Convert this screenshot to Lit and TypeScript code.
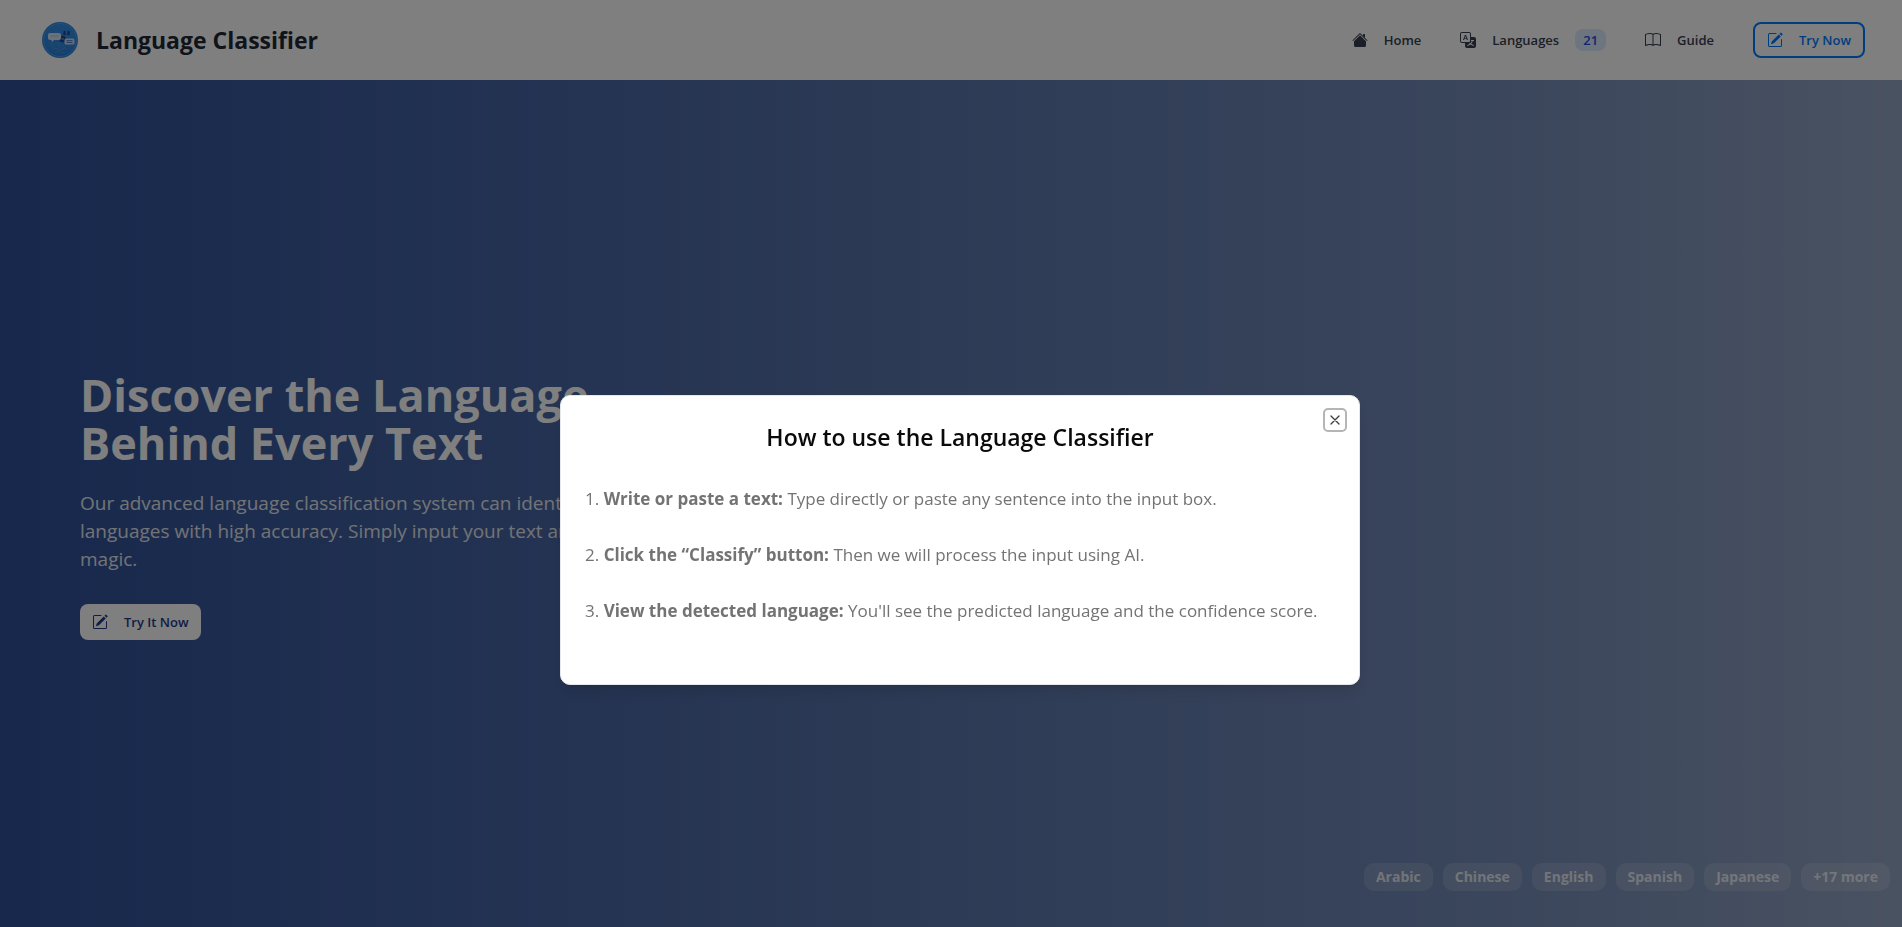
import { LitElement, html, css, svg, nothing } from "lit";
import { customElement, property, state } from "lit/decorators.js";

const ICONS: Record<string, string[]> = {
  home: [
    "M13 2.5V6l-2-2V2.5a.5.5 0 0 1 .5-.5h1a.5.5 0 0 1 .5.5z",
    "M8 3.3l6 6v4.2a1.5 1.5 0 0 1-1.500 1.500h-9A1.500 1.500 0 0 1 2 13.500V9.300l6-6z",
    "M7.293 1.500a1 1 0 0 1 1.414 0l6.647 6.646a.5.5 0 0 1-.708.708L8 2.207 1.354 8.854a.5.5 0 1 1-.708-.708L7.293 1.500z",
  ],
  translate: [
    "M4.545 6.714 4.110 8H3l1.862-5h1.284L8 8H6.833l-.435-1.286H4.545zm1.634-.736L5.500 3.956h-.049l-.679 2.022H6.180z",
    "M0 2a2 2 0 0 1 2-2h7a2 2 0 0 1 2 2v3h3a2 2 0 0 1 2 2v7a2 2 0 0 1-2 2H7a2 2 0 0 1-2-2v-3H2a2 2 0 0 1-2-2V2zm2-1a1 1 0 0 0-1 1v7a1 1 0 0 0 1 1h7a1 1 0 0 0 1-1V2a1 1 0 0 0-1-1H2zm7.138 9.995c.193.301.402.583.630.846-.748.575-1.673 1.001-2.768 1.292.178.217.451.635.555.867 1.125-.359 2.080-.844 2.886-1.494.777.665 1.739 1.165 2.930 1.472.133-.254.414-.673.629-.890-1.125-.253-2.057-.694-2.820-1.284.681-.747 1.222-1.651 1.621-2.757H14V8h-3v1.047h.765c-.318.844-.740 1.546-1.272 2.130a6.066 6.066 0 0 1-.415-.492 1.988 1.988 0 0 1-.940.310z",
  ],
  book: [
    "M1 2.828c.885-.370 2.154-.769 3.388-.893 1.330-.134 2.458.063 3.112.752v9.746c-.935-.530-2.120-.603-3.213-.493-1.180.120-2.370.461-3.287.811V2.828zm7.500-.141c.654-.689 1.782-.886 3.112-.752 1.234.124 2.503.523 3.388.893v9.923c-.918-.350-2.107-.692-3.287-.810-1.094-.111-2.278-.039-3.213.492V2.687zM8 1.783C7.015.936 5.587.810 4.287.940c-1.514.153-3.042.672-3.994 1.105A.5.5 0 0 0 0 2.500v11a.5.5 0 0 0 .707.455c.882-.400 2.303-.881 3.680-1.020 1.409-.142 2.590.087 3.223.877a.5.5 0 0 0 .780 0c.633-.790 1.814-1.019 3.222-.877 1.378.139 2.800.620 3.681 1.020A.5.5 0 0 0 16 13.500v-11a.5.5 0 0 0-.293-.455c-.952-.433-2.480-.952-3.994-1.105C10.413.809 8.985.936 8 1.783z",
  ],
  pencil: [
    "M15.502 1.940a.5.5 0 0 1 0 .706L14.459 3.690l-2-2L13.502.646a.5.5 0 0 1 .707 0l1.293 1.293zm-1.750 2.456-2-2L4.939 9.210a.5.5 0 0 0-.121.196l-.805 2.414a.250.250 0 0 0 .316.316l2.414-.805a.5.5 0 0 0 .196-.120l6.813-6.814z",
    "M1 13.500A1.500 1.500 0 0 0 2.500 15h11a1.500 1.500 0 0 0 1.500-1.500v-6a.5.5 0 0 0-1 0v6a.5.5 0 0 1-.5.5h-11a.5.5 0 0 1-.5-.5v-11a.5.5 0 0 1 .5-.5H9a.5.5 0 0 0 0-1H2.500A1.500 1.500 0 0 0 1 2.500v11z",
  ],
};

@customElement("lc-icon")
export class LcIcon extends LitElement {
  @property() name = "home";

  static styles = css`
    :host { display: block; width: 16px; height: 16px; flex: none; }
    svg { display: block; width: 100%; height: 100%; }
  `;

  render() {
    return html`<svg viewBox="0 0 16 16" fill="currentColor" aria-hidden="true">
      ${(ICONS[this.name] ?? []).map((d) => svg`<path fill-rule="evenodd" d=${d}></path>`)}
    </svg>`;
  }
}

@customElement("lc-logo")
export class LcLogo extends LitElement {
  static styles = css`
    :host { display: block; width: 36px; height: 36px; flex: none; }
    svg { display: block; width: 100%; height: 100%; }
  `;

  render() {
    return html`<svg viewBox="0 0 36 36" role="img" aria-label="Language Classifier logo">
      <defs>
        <linearGradient id="disc" x1="0" y1="0" x2="0" y2="1">
          <stop offset="0" stop-color="#3591ea"></stop>
          <stop offset="1" stop-color="#2a80d8"></stop>
        </linearGradient>
      </defs>
      <circle cx="18" cy="18" r="18" fill="#2f88e2"></circle>
      <circle cx="18" cy="18" r="16.500" fill="url(#disc)" stroke="#58a4f0" stroke-width=".7"></circle>
      <g fill="none" stroke="#5d9edb" stroke-width=".6" stroke-dasharray="2 1">
        <path d="M7 24l3-3 3 2 4-3 4 4 5-2 3 3M10 28l4-2 3 3 5-3 4 1M13 31l3-2 4 2 3-1M9 21l2 5 4 1 2-5 3 6 4-4"></path>
      </g>
      <g fill="#1c4a96">
        <circle cx="22.500" cy="10" r="1.200"></circle><path d="M21 13l.7-2.500h1.600L24 13z"></path>
        <circle cx="26.500" cy="10" r="1.200"></circle><path d="M25 13l.7-2.500h1.600L28 13z"></path>
        <circle cx="20.500" cy="17" r="3.200"></circle>
      </g>
      <circle cx="20.700" cy="17" r="1.200" fill="#4a80c4"></circle>
      <path d="M8 11h9a2 2 0 0 1 2 2v3a2 2 0 0 1-2 2h-5l-2 2-.5-2H8a2 2 0 0 1-2-2v-3a2 2 0 0 1 2-2z" fill="#d9e4f4"></path>
      <path d="M8.500 14h8" stroke="#a9c0e2" stroke-width=".8"></path>
      <rect x="22.500" y="16.500" width="10" height="6" rx="1.500" fill="#c9daf2"></rect>
      <path d="M24.500 18.700h6M24.500 20.500h6" stroke="#3568b0" stroke-width=".8"></path>
    </svg>`;
  }
}

const LANGUAGES = ["Arabic", "Chinese", "English", "Spanish", "Japanese", "+17 more"];

const STEPS = [
  { title: "Write or paste a text:", body: "Type directly or paste any sentence into the input box." },
  { title: "Click the “Classify” button:", body: "Then we will process the input using AI." },
  { title: "View the detected language:", body: "You'll see the predicted language and the confidence score." },
];

@customElement("app-root")
export class AppRoot extends LitElement {
  @state() private guideOpen = true;

  static styles = css`
    :host {
      display: block;
      font-family: "Segoe UI", "Open Sans", "Noto Sans", sans-serif;
      color: #1f2937;
    }
    * { box-sizing: border-box; }
    h1, h2, p, ol { margin: 0; padding: 0; }
    a { color: inherit; text-decoration: none; }
    button { font: inherit; color: inherit; cursor: pointer; }
    .page { display: flex; flex-direction: column; min-height: 100vh; }
    .bar {
      display: flex; align-items: center; justify-content: space-between;
      height: 80px; padding: 0 37px 0 42px; background: #fff;
    }
    .brand { display: flex; align-items: center; gap: 18px; font-size: 23px; font-weight: 700; line-height: 32px; }
    .nav { display: flex; align-items: center; gap: 39px; font-size: 13px; font-weight: 600; line-height: 20px; color: #374151; }
    .link { display: flex; align-items: center; gap: 16px; }
    .link lc-icon { color: #374151; }
    .badge { padding: 1px 8px; border-radius: 8px; background: #dbeafe; color: #1d4ed8; }
    .btn {
      display: flex; align-items: center; gap: 16px; height: 36px; padding: 0 12px;
      border: 0; border-radius: 8px; background: #fff; font-size: 13px; font-weight: 600; line-height: 20px;
    }
    .btn.outline { border: 2px solid #007bff; color: #007bff; background: transparent; }
    .btn.solid { color: #1e3a8a; align-self: flex-start; }
    .hero {
      flex: 1; display: flex; flex-direction: column; justify-content: space-between;
      background: linear-gradient(to right, #2e5099, #778eb9 80%, #94a5c4);
    }
    .pitch { flex: 1; display: flex; flex-direction: column; justify-content: center; padding: 68px 80px 0; }
    .pitch h1 { font-size: 45px; font-weight: 700; line-height: 48px; color: #fff; }
    .pitch p { margin: 22px 0 31px; font-size: 19px; line-height: 28px; color: #e5e7eb; }
    .chips { display: flex; justify-content: flex-end; gap: 10px; padding: 0 12px 36px; }
    .chip {
      padding: 2px 12px; border-radius: 10px; background: rgba(255, 255, 255, 0.15);
      color: rgba(255, 255, 255, 0.8); font-size: 14px; font-weight: 700; line-height: 24px;
    }
    .overlay {
      position: fixed; inset: 0; display: grid; place-items: center;
      padding: 152px 0 0 18px; background: rgba(0, 0, 0, 0.5);
    }
    .dialog {
      position: relative; width: 800px; max-width: 100%; padding: 23px 24px 59px;
      border: 1px solid #e5e7eb; border-radius: 10px; background: #fff;
      box-shadow: 0 10px 15px -3px rgba(0, 0, 0, 0.1), 0 4px 6px -4px rgba(0, 0, 0, 0.1);
    }
    .dialog h2 { margin-bottom: 2px; font-size: 23px; font-weight: 600; line-height: 36px; text-align: center; color: #0a0a0a; }
    .steps { display: flex; flex-direction: column; gap: 28px; padding-top: 28px; list-style: none; counter-reset: step; color: #737373; font-size: 17px; line-height: 28px; }
    .step { counter-increment: step; }
    .step::before { content: counter(step) ". "; }
    .close {
      position: absolute; top: 12px; right: 12px; display: grid; place-items: center;
      width: 24px; height: 24px; padding: 0; border: 2px solid #b5b5b5; border-radius: 5px; background: #fff;
    }
    .close svg { width: 16px; height: 16px; }
  `;

  private openGuide = () => { this.guideOpen = true; };
  private closeGuide = () => { this.guideOpen = false; };

  private renderGuide() {
    return html`<div class="overlay">
      <section class="dialog" role="dialog" aria-modal="true" aria-labelledby="guide-title">
        <h2 id="guide-title">How to use the Language Classifier</h2>
        <ol class="steps">
          ${STEPS.map((s) => html`<li class="step"><strong>${s.title}</strong> ${s.body}</li>`)}
        </ol>
        <button class="close" aria-label="Close" @click=${this.closeGuide}>
          <svg viewBox="0 0 24 24" fill="none" stroke="#404040" stroke-width="2" stroke-linecap="round"><path d="M18 6 6 18M6 6l12 12"></path></svg>
        </button>
      </section>
    </div>`;
  }

  render() {
    return html`
      <div class="page">
        <header class="bar">
          <a class="brand" href="#"><lc-logo></lc-logo><span>Language Classifier</span></a>
          <nav class="nav">
            <a class="link" href="#home"><lc-icon name="home"></lc-icon>Home</a>
            <a class="link" href="#languages"><lc-icon name="translate"></lc-icon>Languages<span class="badge">21</span></a>
            <a class="link" href="#guide" @click=${this.openGuide}><lc-icon name="book"></lc-icon>Guide</a>
            <button class="btn outline"><lc-icon name="pencil"></lc-icon>Try Now</button>
          </nav>
        </header>
        <main class="hero">
          <div class="pitch">
            <h1>Discover the Language<br />Behind Every Text</h1>
            <p>Our advanced language classification system can identify 21<br />languages with high accuracy. Simply input your text and see the<br />magic.</p>
            <button class="btn solid"><lc-icon name="pencil"></lc-icon>Try It Now</button>
          </div>
          <div class="chips">${LANGUAGES.map((l) => html`<span class="chip">${l}</span>`)}</div>
        </main>
      </div>
      ${this.guideOpen ? this.renderGuide() : nothing}
    `;
  }
}
